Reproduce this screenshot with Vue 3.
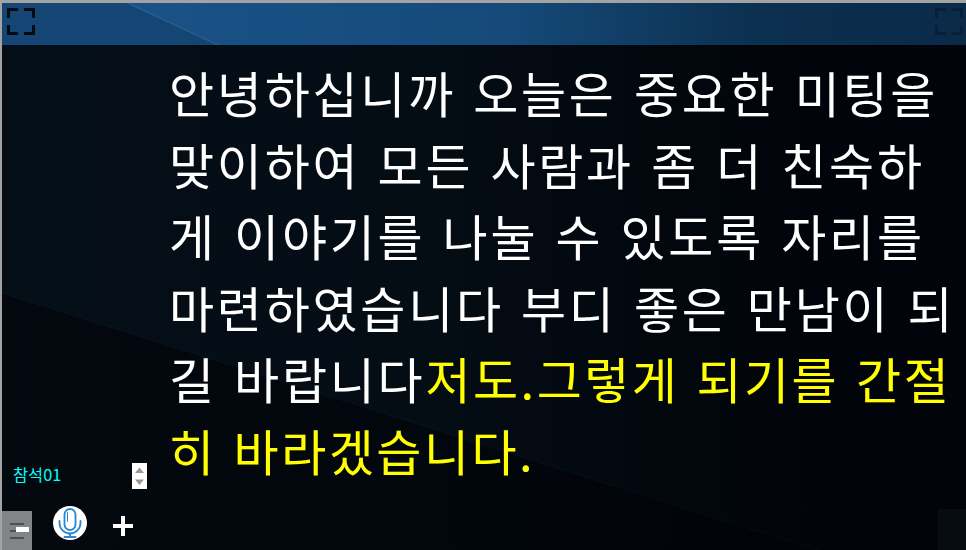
<script setup>
const whiteText = '안녕하십니까 오늘은 중요한 미팅을 맞이하여 모든 사람과 좀 더 친숙하게 이야기를 나눌 수 있도록 자리를 마련하였습니다 부디 좋은 만남이 되길 바랍니다'
const yellowText = '저도.그렇게 되기를 간절히 바라겠습니다.'
</script>

<template>
  <div class="screen">
    <header class="top">
      <svg class="frame-icon" width="28" height="27" viewBox="0 0 28 27">
        <path d="M1.500 10V1.500H11M17 1.500H26.500V10M26.500 17V25.500H17M11 25.500H1.500V17" fill="none" stroke="#030a12" stroke-width="3" />
      </svg>
      <svg class="frame-icon dim" width="28" height="27" viewBox="0 0 28 27">
        <path d="M1.500 10V1.500H11M17 1.500H26.500V10M26.500 17V25.500H17M11 25.500H1.500V17" fill="none" stroke="#0a1f36" stroke-width="3" />
      </svg>
    </header>
    <main class="body">
      <aside class="side">
        <div class="speaker">
          <span class="name">참석01</span>
          <div class="spinner">
            <svg width="15" height="26" viewBox="0 0 15 26">
              <path d="M7.5 4.5L12 10H3Z" fill="#999" />
              <path d="M7.5 22L12 16.500H3Z" fill="#999" />
            </svg>
          </div>
        </div>
        <div class="tools">
          <div class="menu">
            <span class="bar"></span>
            <span class="bar short"><i class="knob"></i></span>
            <span class="bar"></span>
          </div>
          <div class="mic">
            <svg width="26" height="30" viewBox="0 0 26 30">
              <g fill="none" stroke="#2a86d0" stroke-width="1.800" stroke-linecap="round">
                <rect x="7.500" y="1" width="11" height="21" rx="5.500" />
                <path d="M2.500 13v2a10.500 10.500 0 0 0 21 0v-2" />
                <path d="M13 25.500V29M7.500 29H18.500" />
                <path d="M10.500 4.500v9" stroke-width="1" />
              </g>
            </svg>
          </div>
          <span class="plus"></span>
        </div>
      </aside>
      <p class="caption">{{ whiteText }}<span class="reply">{{ yellowText }}</span></p>
    </main>
    <div class="corner"></div>
  </div>
</template>

<style scoped>
.screen {
  position: relative;
  width: 966px;
  height: 550px;
  box-sizing: border-box;
  overflow: hidden;
  display: flex;
  flex-direction: column;
  border-top: 3px solid #a3a3a3;
  border-left: 2px solid #a3a3a3;
  background: #01040a;
  font-family: "Noto Sans CJK KR", "Noto Sans", sans-serif;
}
.top {
  position: relative;
  flex: none;
  height: 42px;
  box-sizing: border-box;
  padding: 5px 3px 0 5px;
  display: flex;
  justify-content: space-between;
  align-items: flex-start;
  background:
    linear-gradient(205deg, transparent 79.300%, rgba(110, 160, 205, 0.2) 79.500%, rgba(0, 25, 50, 0.22) 79.800%),
    linear-gradient(90deg, #1a5287 0%, #1a5287 15%, #154a7a 52%, #0c3050 78%, #0a2a48 100%);
}
.frame-icon {
  display: block;
  flex: none;
}
.body {
  flex: 1;
  min-height: 0;
  display: flex;
  background:
    linear-gradient(197.500deg, transparent 68.100%, rgba(40, 50, 60, 0.12) 68.200%, rgba(0, 2, 6, 0.5) 68.350%),
    linear-gradient(90deg, #050f18 0%, #040c14 45%, #01040a 85%);
}
.side {
  flex: none;
  width: 167px;
  display: flex;
  flex-direction: column;
  justify-content: flex-end;
}
.speaker {
  display: flex;
  align-items: center;
  justify-content: space-between;
  width: 145px;
  padding: 0 0 21px 11px;
  box-sizing: border-box;
}
.name {
  color: #0ff;
  font-size: 16.400px;
  line-height: 20px;
  margin-bottom: 4px;
}
.spinner {
  width: 15px;
  height: 26px;
  background: #fff;
}
.spinner svg {
  display: block;
}
.tools {
  display: flex;
  align-items: flex-start;
  height: 40px;
}
.menu {
  width: 30px;
  height: 40px;
  margin-top: 1px;
  box-sizing: border-box;
  padding: 12px 0 0 8px;
  background: #828588;
  display: flex;
  flex-direction: column;
  gap: 5px;
}
.bar {
  position: relative;
  display: block;
  width: 14px;
  height: 2px;
  background: #4d5154;
}
.knob {
  position: absolute;
  left: 6px;
  top: -3px;
  width: 13px;
  height: 5px;
  background: #fff;
}
.mic {
  width: 34px;
  height: 34px;
  margin: -4px 0 0 21px;
  border-radius: 50%;
  background: #fff;
  display: flex;
  align-items: center;
  justify-content: center;
}
.plus {
  position: relative;
  width: 20px;
  height: 20px;
  margin: 6px 0 0 26px;
  background:
    linear-gradient(#fff, #fff) center / 20px 4px no-repeat,
    linear-gradient(#fff, #fff) center / 4px 20px no-repeat;
}
.caption {
  flex: 1;
  min-width: 0;
  margin: 11px 0 0;
  padding-right: 8px;
  color: #fff;
  font-size: 49px;
  font-weight: 400;
  letter-spacing: 2.750px;
  word-spacing: 3.500px;
  line-height: 71.600px;
  word-break: break-all;
}
.reply {
  color: #ffff00;
  letter-spacing: 2.500px;
}
.corner {
  position: absolute;
  right: 0;
  bottom: 0;
  width: 28px;
  height: 41px;
  background: #070c11;
}
</style>
